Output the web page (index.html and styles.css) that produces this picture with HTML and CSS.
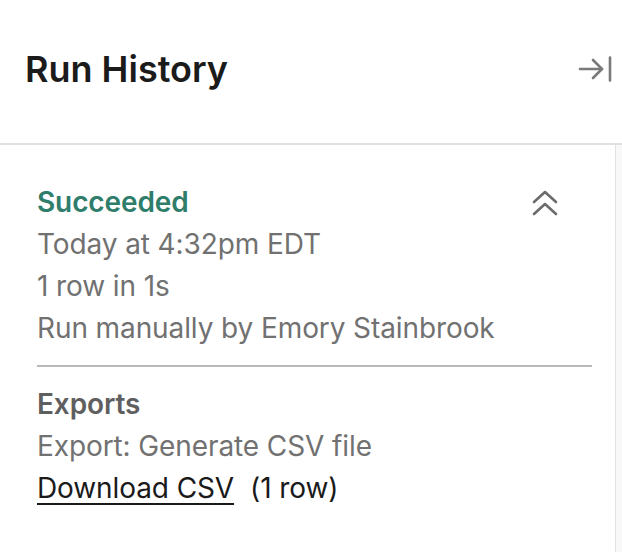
FILE: index.html
```html
<!DOCTYPE html>
<html>
<head>
<meta charset="utf-8">
<link rel="stylesheet" href="styles.css">
</head>
<body>
<div class="panel">
  <header class="header">
    <h1 class="title">Run History</h1>
    <button class="icon-btn" aria-label="Collapse">
      <svg width="34" height="28" viewBox="0 0 34 28" fill="none" stroke="#7a7a7a" stroke-width="2.6" stroke-linecap="round" stroke-linejoin="round">
        <path d="M2 14 H24"/>
        <path d="M15 5 L24 14 L15 23"/>
        <path d="M32 2.5 V25.5"/>
      </svg>
    </button>
  </header>
  <div class="body">
    <div class="content">
      <div class="run">
        <div class="run-head">
          <div class="status">Succeeded</div>
          <button class="icon-btn chevrons" aria-label="Collapse run">
            <svg width="28" height="26" viewBox="0 0 28 26" fill="none" stroke="#6b6b6b" stroke-width="2.6" stroke-linecap="round" stroke-linejoin="round">
              <path d="M3 12 L14 2 L25 12"/>
              <path d="M3 24 L14 14 L25 24"/>
            </svg>
          </button>
        </div>
        <div class="line">Today at 4:32pm EDT</div>
        <div class="line">1 row in 1s</div>
        <div class="line">Run manually by Emory Stainbrook</div>
      </div>
      <hr class="divider">
      <div class="exports">
        <div class="exports-title">Exports</div>
        <div class="line">Export: Generate CSV file</div>
        <div class="download"><a class="link" href="#">Download CSV</a><span class="rows">(1 row)</span></div>
      </div>
    </div>
    <div class="scrollbar"></div>
  </div>
</div>
</body>
</html>
```

FILE: styles.css
```css
html, body {
  margin: 0;
  padding: 0;
  background: #ffffff;
}

body {
  font-family: "Inter", "Liberation Sans", sans-serif;
  width: 622px;
  height: 552px;
  overflow: hidden;
}

.panel {
  display: flex;
  flex-direction: column;
  height: 552px;
}

.header {
  height: 145px;
  box-sizing: border-box;
  border-bottom: 2px solid #e0e0e0;
  display: flex;
  align-items: center;
  justify-content: space-between;
  padding: 0 10px 6px 25px;
}

.title {
  margin: 0;
  font-family: "Inter", "Liberation Sans", sans-serif;
  font-weight: 600;
  font-size: 36px;
  line-height: 44px;
  color: #1b1b1b;
}

.icon-btn {
  border: none;
  background: transparent;
  padding: 0;
  display: flex;
  cursor: pointer;
}

.body {
  flex: 1;
  display: flex;
}

.content {
  flex: 1;
  padding: 36px 23px 0 37px;
  font-size: 28px;
  line-height: 42px;
  letter-spacing: -0.1px;
  color: #717171;
}

.run-head {
  display: flex;
  justify-content: space-between;
  align-items: center;
}

.status {
  color: #2f7d6b;
  font-weight: 600;
}

.chevrons {
  margin-right: 33px;
  margin-top: 2px;
}

.divider {
  border: none;
  border-top: 2px solid #b9b9b9;
  margin: 16px 0 16px;
}

.exports-title {
  font-weight: 600;
  color: #5f5f5f;
}

.download {
  color: #1a1a1a;
}

.link {
  color: #1a1a1a;
  text-decoration: underline;
  text-underline-offset: 5px;
  text-decoration-thickness: 2px;
}

.rows {
  margin-left: 16px;
}

.scrollbar {
  width: 6px;
  border-left: 1px solid #e2e2e2;
  background: #f8f8f8;
}
```
